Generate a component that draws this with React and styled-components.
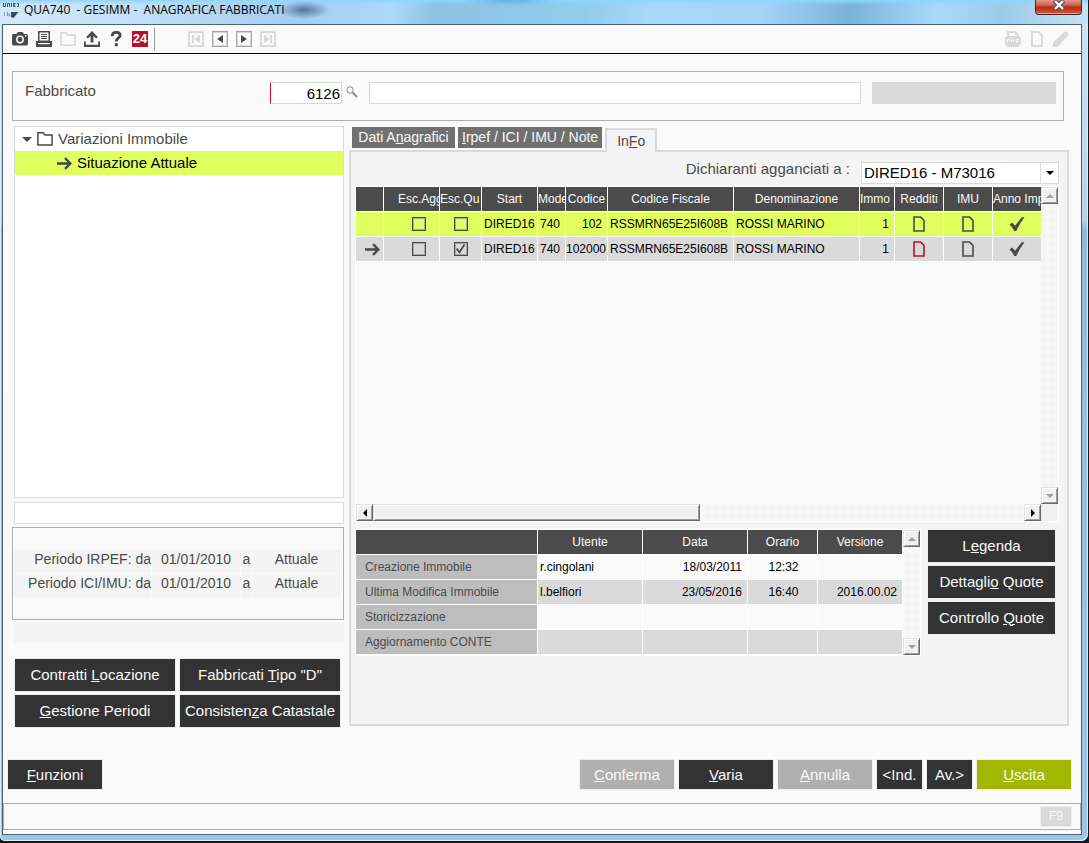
import styled, { createGlobalStyle, css } from 'styled-components';

const GlobalStyle = createGlobalStyle`
  * {
    box-sizing: border-box;
  }

  body {
    margin: 0;
    background: #16191c;
    color: #4a4a4a;
    font-family: 'Liberation Sans', Arial, sans-serif;
    font-size: 15px;
  }

  button,
  input,
  select {
    font: inherit;
    margin: 0;
    border-radius: 0;
  }
`;

const Desktop = styled.div`
  display: flex;
  min-height: 100vh;
  padding: 0 1px 2px 0;
  background: #16191c;
`;

const WindowFrame = styled.div`
  flex: 1;
  min-width: 0;
  display: flex;
  flex-direction: column;
  padding: 0 6px 6px 2px;
  border-radius: 0 0 7px 5px;
  background: linear-gradient(
    180deg,
    #cfe4f5 0,
    #b4d4ee 220px,
    #8fbadb 230px,
    #9cc6e6 100%
  );
  box-shadow: inset -1px -1px 0 #d8ecfa, inset 1px 0 0 #d8ecfa;
`;

const TitleBar = styled.header`
  display: flex;
  align-items: flex-start;
  justify-content: space-between;
  height: 24px;
  margin: 0 -6px 0 -2px;
  padding: 0 6px 0 3px;
  background: radial-gradient(
      ellipse 26px 9px at 304px 10px,
      rgba(50, 84, 122, 0.7),
      transparent
    ),
    radial-gradient(
      ellipse 50px 6px at 510px 0,
      rgba(90, 165, 225, 0.8),
      transparent
    ),
    linear-gradient(
      #8fd6fb 0,
      rgba(143, 214, 251, 0) 5px
    ),
    linear-gradient(
      100deg,
      #d3e9fa 0,
      #c3e1f8 12%,
      #a5cdf0 28%,
      #aed9fb 36%,
      #8cc3e2 40%,
      #90cdec 54%,
      #aad8fc 60%,
      #a5d4f8 70%,
      #78b4d8 78%,
      #a8dafb 86%,
      #9ccbea 92%,
      #c5e2f6 100%
    );
`;

const Caption = styled.div`
  display: flex;
  align-items: flex-start;
  gap: 5px;
`;

const WindowTitle = styled.h1`
  margin: 0;
  color: #000;
  font-family: 'Open Sans', 'Noto Sans', sans-serif;
  font-size: 12px;
  font-weight: 400;
  line-height: 20px;
  white-space: pre;
`;

const CloseButton = styled.button`
  display: flex;
  align-items: center;
  justify-content: center;
  width: 47px;
  height: 15px;
  padding: 0 0 4px;
  border: 1px solid #43222a;
  border-top: 0;
  border-radius: 0 0 4px 4px;
  background: linear-gradient(#e09a8c, #cf5a45 40%, #b92b16 50%, #d4553a);
  box-shadow: inset 0 -1px 0 #e8a598;
`;

const Client = styled.div`
  flex: 1;
  display: flex;
  flex-direction: column;
  padding-bottom: 4px;
  border: 1px solid #4f6272;
  background: #fafafa;
`;

const Toolbar = styled.div`
  display: flex;
  align-items: center;
  justify-content: space-between;
  height: 29px;
  padding: 0 11px 0 8px;
  border-bottom: 1px solid #000;
`;

const ToolGroup = styled.div`
  display: flex;
  align-items: center;
  gap: 6px;
`;

const ToolButton = styled.button`
  display: flex;
  width: 18px;
  height: 18px;
  padding: 1px;
  border: 0;
  background: none;
  color: ${({ disabled }) => (disabled ? '#dadada' : '#4a4a4a')};
`;

const NavButton = styled(ToolButton)`
  align-items: center;
  justify-content: center;
  width: 16px;
  height: 16px;
  margin: 0 1px;
  padding: 0;
  border: 1px solid ${({ disabled }) => (disabled ? '#dadada' : '#a4a4a4')};
  box-shadow: inset 0 0 0 1px #dadada;
`;

const Divider = styled.div`
  width: 1px;
  height: 23px;
  margin: 0 26px 0 -1px;
  background: #9a9a9a;
`;

const SearchBox = styled.section`
  display: flex;
  align-items: flex-start;
  height: 50px;
  margin: 17px 17px 5px 9px;
  padding: 10px 7px 0 12px;
  border: 1px solid #aeaeae;
`;

const SearchLabel = styled.label`
  width: 245px;
  line-height: 18px;
`;

const TextField = styled.input`
  flex: ${({ $grow }) => ($grow ? 1 : 'none')};
  min-width: 0;
  width: ${({ $width }) => $width || 'auto'};
  height: 22px;
  padding: 0 1px;
  border: 1px solid #dadada;
  border-left-color: ${({ $required }) => ($required ? '#c8102e' : '#dadada')};
  background: #fff;
  color: #000;
  text-align: ${({ $align }) => $align || 'left'};

  &:read-only {
    background: #dadada;
  }
`;

const LookupButton = styled(ToolButton)`
  width: 14px;
  height: 14px;
  margin: 3px 10px 0 3px;
  color: #8c8c8c;
`;

const Gap = styled.div`
  width: 11px;
`;

const Columns = styled.main`
  flex: 1;
  display: flex;
  gap: 5px;
  padding: 0 12px 0 9px;
`;

const Sidebar = styled.aside`
  flex: none;
  display: flex;
  flex-direction: column;
  width: 332px;
`;

const Tree = styled.ul`
  flex: 1;
  margin: 0 0 4px 2px;
  padding: 0;
  border: 1px solid #dadada;
  background: #fff;
  list-style: none;
`;

const TreeItem = styled.li`
  display: flex;
  align-items: center;
  gap: 5px;
  height: 24px;
  padding-left: ${({ $level }) => ($level ? 42 : 7)}px;
  background: ${({ $selected }) => ($selected ? '#e0ff5f' : 'none')};
  color: ${({ $selected }) => ($selected ? '#000' : '#4a4a4a')};

  span {
    padding-bottom: 2px;
  }
`;

const TreeNote = styled(TextField)`
  margin: 0 0 3px 2px;
`;

const PeriodBox = styled.section`
  display: flex;
  flex-direction: column;
  gap: 1px;
  height: 93px;
  padding: 22px 3px 0 1px;
  border: 1px solid #aeaeae;
`;

const PeriodRow = styled.div`
  display: grid;
  grid-template-columns: 137px 88px 11px 1fr;
  column-gap: 1px;
  height: 23px;
  font-size: 14px;
  line-height: 18px;
  text-align: center;
  white-space: nowrap;

  span {
    background: #f4f4f4;
  }

  span:first-child {
    text-align: right;
  }
`;

const Message = styled.div`
  height: 21px;
  margin: 2px 0 16px 2px;
  background: #f4f4f4;
`;

const ButtonGrid = styled.div`
  display: grid;
  grid-template-columns: 1fr 1fr;
  gap: 4px 5px;
  margin: 0 4px 0 3px;
`;

const tones = {
  dark: '#333333',
  accent: '#a2b800',
};

const Button = styled.button`
  width: ${({ $width }) => $width || 'auto'};
  height: ${({ $low }) => ($low ? 29 : 32)}px;
  padding: 0 0 ${({ $low }) => ($low ? 0 : 2)}px;
  border: 0;
  background: ${({ $tone, disabled }) =>
    disabled ? '#b0b0b0' : tones[$tone || 'dark']};
  box-shadow: 0 0 0 1px #eeeeee;
  color: #fafafa;
  white-space: nowrap;
`;

const Content = styled.section`
  flex: 1;
  min-width: 0;
  display: flex;
  flex-direction: column;
  padding-bottom: 1px;
`;

const Tabs = styled.div`
  display: flex;
  align-items: flex-start;
  gap: 3px;
  height: 24px;
  padding: 1px 3px 0;
`;

const Tab = styled.button`
  min-width: 103px;
  height: 21px;
  padding: 0 4px;
  border: 0;
  background: #707070;
  color: #fafafa;
  font-size: 14px;
  line-height: 21px;
  white-space: nowrap;

  ${({ $active }) =>
    $active &&
    css`
      align-self: flex-end;
      min-width: 52px;
      height: 24px;
      margin-bottom: -2px;
      border: 2px solid #dadada;
      border-bottom: 0;
      background: #f4f4f4;
      color: #4a4a4a;
      z-index: 1;
    `}
`;

const Panel = styled.div`
  flex: 1;
  display: flex;
  flex-direction: column;
  padding: 10px 8px 68px 4px;
  border: 2px solid #dadada;
  background: #f4f4f4;
`;

const FilterRow = styled.div`
  display: flex;
  justify-content: flex-end;
  gap: 11px;
  margin-bottom: 2px;
  line-height: 14px;
`;

const Combo = styled.div`
  display: grid;
  width: 198px;
  height: 22px;
  border: 1px solid #dadada;
  background: #fff;

  select,
  span {
    grid-area: 1 / 1;
  }

  select {
    appearance: none;
    padding: 0 20px 0 2px;
    border: 0;
    background: none;
    color: #000;
  }

  span {
    display: flex;
    align-items: center;
    justify-content: center;
    justify-self: end;
    width: 18px;
    border-left: 1px solid #dadada;
    color: #000;
    pointer-events: none;
  }
`;

const GridFrame = styled.div`
  flex: ${({ $grow }) => ($grow ? 1 : 'none')};
  display: grid;
  grid-template-columns: minmax(0, 1fr) 17px;
  grid-template-rows: 1fr ${({ $grow }) => ($grow ? '17px' : '')};
  border: 1px solid #fff;
  background: #fafafa;
`;

const GridView = styled.div`
  overflow: hidden;
`;

const Table = styled.table`
  width: ${({ $width }) => $width};
  table-layout: fixed;
  border-spacing: 0;
  color: #000;
  font-size: 12px;
`;

const cell = css`
  height: 25px;
  padding: 0 2px;
  border-right: 1px solid #fff;
  border-bottom: 1px solid #fff;
  overflow: hidden;
  white-space: nowrap;
`;

const HeadCell = styled.th`
  ${cell}
  padding: 0 0 0 ${({ $indent }) => $indent || 0}px;
  background: #4b4b4b;
  color: #fafafa;
  font-weight: 400;
  text-align: ${({ $align }) => $align || 'center'};
`;

const RowHead = styled.th`
  ${cell}
  padding-left: 9px;
  background: #bdbdbd;
  color: #4a4a4a;
  font-weight: 400;
  text-align: left;
`;

const Cell = styled.td`
  ${cell}
  padding-right: ${({ $align }) => ($align === 'right' ? 5 : 0)}px;
  text-align: ${({ $align }) => $align || 'left'};
`;

const IconCell = styled.td`
  ${cell}
  padding: 0 0 0 ${({ $indent }) => $indent || 0}px;

  svg,
  input {
    display: block;
    margin: 0 auto;
  }
`;

const Row = styled.tr`
  background: ${({ $tone }) => $tone || 'none'};
`;

const CheckBox = styled.input`
  appearance: none;
  width: 14px;
  height: 14px;
  border: 1px solid #4a4a4a;
  box-shadow: inset 0 0 0 1px #a8a8a8;

  &:checked::before {
    content: '';
    display: block;
    width: 12px;
    height: 12px;
    background: #4a4a4a;
    clip-path: polygon(12% 52%, 26% 42%, 40% 64%, 78% 8%, 90% 14%, 42% 92%);
  }
`;

const ScrollTrack = styled.div`
  display: flex;
  flex-direction: ${({ $vertical }) => ($vertical ? 'column' : 'row')};
  background: repeating-conic-gradient(#fff 0 25%, #f0f0f0 0 50%) 0 0 / 2px 2px;
`;

const bevel = css`
  border: 1px solid;
  border-color: #e3e3e3 #696969 #696969 #e3e3e3;
  background: #f0f0f0;
  box-shadow: inset 1px 1px 0 #fff, inset -1px -1px 0 #a0a0a0;
`;

const ScrollButton = styled.button`
  ${bevel}
  display: flex;
  align-items: center;
  justify-content: center;
  width: 17px;
  height: 17px;
  padding: 0;
  color: ${({ disabled }) => (disabled ? '#a0a0a0' : '#000')};
`;

const ScrollThumb = styled.div`
  ${bevel}
  flex: 1;
`;

const Spacer = styled.div`
  flex: 1;
`;

const Corner = styled.div`
  background: #f0f0f0;
`;

const LogRow = styled.div`
  display: flex;
  gap: 7px;
  margin-top: 7px;
`;

const ButtonStack = styled.div`
  display: flex;
  flex-direction: column;
  gap: 4px;
  padding-top: 1px;
`;

const ActionBar = styled.footer`
  display: flex;
  gap: 5px;
  margin: 33px 10px 14px 5px;
`;

const StatusBar = styled.div`
  display: flex;
  align-items: center;
  justify-content: flex-end;
  height: 27px;
  padding-right: 8px;
  border: 1px solid #aeaeae;
`;

const StatusKey = styled.span`
  width: 32px;
  height: 21px;
  border: 1px solid #eeeeee;
  background: #dadada;
  color: #fafafa;
  font-size: 12px;
  line-height: 19px;
  text-align: center;
`;

const ARROWS = {
  up: '0,4 8,4 4,0',
  down: '0,0 8,0 4,4',
  left: '4,0 4,8 0,4',
  right: '0,0 4,4 0,8',
};

const Arrow = ({ dir, width, height }) => {
  const tall = dir === 'left' || dir === 'right';
  const w = tall ? 4 : 8;
  const h = tall ? 8 : 4;
  return (
    <svg
      width={width || w}
      height={height || h}
      viewBox={`0 0 ${w} ${h}`}
      preserveAspectRatio="none"
    >
      <polygon points={ARROWS[dir]} fill="currentColor" />
    </svg>
  );
};

const Icon = ({ size = 16, children }) => (
  <svg width={size} height={size} viewBox="0 0 16 16" fill="currentColor">
    {children}
  </svg>
);

const CameraIcon = () => (
  <Icon>
    <path d="M1 3h3.500L6 1h4.500L12 3h3l1 1v9.500l-1 1H1l-1-1V4z" />
    <circle cx="8" cy="8.500" r="3.200" fill="none" stroke="#fafafa" strokeWidth="1.500" />
    <rect x="13" y="4" width="1.500" height="1.500" fill="#fafafa" />
  </Icon>
);

const PrinterIcon = () => (
  <Icon>
    <path fillRule="evenodd" d="M2 0h12v10H2zM3.500 1.500v8h9v-8z" />
    <path d="M5 3h6v1H5zM5 5h6v1H5zM5 7h6v1H5zM0 10h16v6H0z" />
    <path d="M2 12h12v1.200H2z" fill="#fafafa" />
  </Icon>
);

const FolderIcon = ({ weight = 1.5 }) => (
  <Icon>
    <path
      d="M.9 1.800h5.300L8 4h7.100v10.100H.9z"
      fill="none"
      stroke="currentColor"
      strokeWidth={weight}
    />
  </Icon>
);

const UploadIcon = () => (
  <Icon>
    <path d="M8 0l5.800 6-1.700 1.500-2.700-2.400v6.400H6.600V5.100L3.900 7.500 2.200 6z" />
    <path d="M0 10.500h1.800v3.300h12.400v-3.300H16V16H0z" />
  </Icon>
);

const HelpIcon = () => (
  <Icon>
    <path
      d="M4.200 5.200c0-5.200 8-4.800 8-1 0 2.900-3.900 2.600-3.900 6.200"
      fill="none"
      stroke="currentColor"
      strokeWidth="2.800"
    />
    <rect x="6.800" y="12.200" width="3" height="3" />
  </Icon>
);

const Badge24 = styled.button`
  width: 16px;
  height: 16px;
  margin: 0 1px;
  padding: 0;
  border: 0;
  background: #b8102c;
  color: #fff;
  font-size: 13px;
  font-weight: 700;
  line-height: 16px;
`;

const SkipIcon = ({ flip }) => (
  <svg width="10" height="10" viewBox="0 0 10 10" fill="currentColor">
    <g transform={flip ? 'matrix(-1 0 0 1 10 0)' : undefined}>
      <path d="M1 1h2v8H1zM9 .5v9L3.500 5z" />
    </g>
  </svg>
);

const PdfIcon = () => (
  <Icon>
    <path
      fillRule="evenodd"
      d="M2 6V0h8.500L14 3.500V6h2v8h-2v2H2v-2H0V6zM4 2v3h8V4h-2V2z"
    />
    <path
      d="M2.500 11V8.500h2V10M6.500 8v3M8.500 8.500v2M11.500 12V8.500H14M11.500 10.500H13"
      fill="none"
      stroke="#fafafa"
    />
  </Icon>
);

const PageIcon = ({ color = 'currentColor', weight = 1.6 }) => (
  <Icon>
    <path
      d="M3 1h6.500L13 4.500V15H3z"
      fill="none"
      stroke={color}
      strokeWidth={weight}
    />
    <path d="M9 1l4 4V3.500L10.500 1z" fill={color} />
  </Icon>
);

const PencilIcon = () => (
  <Icon>
    <path d="M0 16v-4.500L11.500.8c1.600-1.600 5.300 1.800 3.700 3.700L4.500 16z" />
  </Icon>
);

const LensIcon = () => (
  <svg width="12" height="12" viewBox="0 0 12 12" fill="none" stroke="currentColor">
    <circle cx="4" cy="4" r="3.200" />
    <path d="M6.500 6.500l4.500 4.500" strokeWidth="2" />
  </svg>
);

const RowArrowIcon = () => (
  <svg width="15" height="13" viewBox="0 0 15 13" fill="none" stroke="#4a4a4a">
    <path d="M0 6.500h13M8 1.200l5.300 5.300L8 11.800" strokeWidth="2.400" />
  </svg>
);

const TickIcon = () => (
  <svg width="16" height="16" viewBox="0 0 16 16" fill="#4a4a4a">
    <path d="M.5 8.500L3.200 6.400 6 9.800 12.800 1.200h2.700C12 6 9.500 10 7.300 15H5.200C4 12.500 2.500 10.500.5 8.500z" />
  </svg>
);

const AppIcon = () => (
  <svg width="16" height="18" viewBox="0 0 16 18">
    <g fill="none" stroke="#35566f">
      <path d="M.5 3v3.500h2V3M4.500 7V3.500h2V7M8.500 3v4M12.500 3.500h-2v3h2M10.500 5h2M14 3.500h1.500v3H14" />
      <path d="M1.500 12v4M4.500 12v4h2v-2h-2" opacity=".5" />
    </g>
    <path d="M8 12h7.500l-5 6-2.500-1z" fill="#2f4d66" />
  </svg>
);

const CloseIcon = () => (
  <svg width="12" height="10" viewBox="0 0 12 10">
    <path d="M1.500.5l9 9M10.500.5l-9 9" stroke="#4a4a5a" strokeWidth="4.500" />
    <path d="M2 1l8 8M10 1L2 9" stroke="#fff" strokeWidth="2.400" />
  </svg>
);

const COLUMNS = [
  { label: '', width: 28 },
  { label: 'Esc.Agg', width: 56, align: 'left', indent: 14 },
  { label: 'Esc.Qu', width: 42, align: 'left' },
  { label: 'Start', width: 56 },
  { label: 'Mode', width: 28, align: 'left' },
  { label: 'Codice', width: 42 },
  { label: 'Codice Fiscale', width: 126 },
  { label: 'Denominazione', width: 126 },
  { label: 'Immo', width: 35, align: 'left' },
  { label: 'Redditi', width: 49 },
  { label: 'IMU', width: 49 },
  { label: 'Anno Imp', width: 49, align: 'left' },
];

const DECLARANTS = [
  {
    start: 'DIRED16',
    model: '740',
    code: '102',
    taxCode: 'RSSMRN65E25I608B',
    name: 'ROSSI MARINO',
    building: 1,
    tone: '#e0ff5f',
  },
  {
    current: true,
    skipShare: true,
    start: 'DIRED16',
    model: '740',
    code: '102000',
    taxCode: 'RSSMRN65E25I608B',
    name: 'ROSSI MARINO',
    building: 1,
    incomeColor: '#b8102c',
    tone: '#dadada',
  },
];

const LOG = [
  ['Creazione Immobile', 'r.cingolani', '18/03/2011', '12:32', ''],
  ['Ultima Modifica Immobile', 'l.belfiori', '23/05/2016', '16:40', '2016.00.02'],
  ['Storicizzazione', '', '', '', ''],
  ['Aggiornamento CONTE', '', '', '', ''],
];

const VerticalScroll = () => (
  <ScrollTrack $vertical>
    <ScrollButton aria-label="Su" disabled>
      <Arrow dir="up" />
    </ScrollButton>
    <Spacer />
    <ScrollButton aria-label="Giù" disabled>
      <Arrow dir="down" />
    </ScrollButton>
  </ScrollTrack>
);

const DeclarantGrid = () => (
  <GridFrame $grow>
    <GridView>
      <Table $width="686px">
        <colgroup>
          {COLUMNS.map(({ width }, i) => (
            <col key={i} width={width} />
          ))}
        </colgroup>
        <thead>
          <tr>
            {COLUMNS.map(({ label, align, indent }, i) => (
              <HeadCell key={i} $align={align} $indent={indent}>
                {label}
              </HeadCell>
            ))}
          </tr>
        </thead>
        <tbody>
          {DECLARANTS.map((item) => (
            <Row key={item.code} $tone={item.tone}>
              <IconCell $indent={6}>{item.current && <RowArrowIcon />}</IconCell>
              <IconCell $indent={14}>
                <CheckBox type="checkbox" aria-label="Esc.Agg" />
              </IconCell>
              <IconCell>
                <CheckBox
                  type="checkbox"
                  aria-label="Esc.Qu"
                  defaultChecked={item.skipShare}
                />
              </IconCell>
              <Cell>{item.start}</Cell>
              <Cell>{item.model}</Cell>
              {item.code.length > 5 ? (
                <IconCell>{item.code}</IconCell>
              ) : (
                <Cell $align="right">{item.code}</Cell>
              )}
              <Cell>{item.taxCode}</Cell>
              <Cell>{item.name}</Cell>
              <Cell $align="right">{item.building}</Cell>
              <IconCell>
                <PageIcon color={item.incomeColor || '#4a4a4a'} />
              </IconCell>
              <IconCell>
                <PageIcon color="#4a4a4a" />
              </IconCell>
              <IconCell>
                <TickIcon />
              </IconCell>
            </Row>
          ))}
        </tbody>
      </Table>
    </GridView>
    <VerticalScroll />
    <ScrollTrack>
      <ScrollButton aria-label="Sinistra">
        <Arrow dir="left" />
      </ScrollButton>
      <ScrollThumb />
      <Spacer />
      <ScrollButton aria-label="Destra">
        <Arrow dir="right" />
      </ScrollButton>
    </ScrollTrack>
    <Corner />
  </GridFrame>
);

const LogGrid = () => (
  <GridFrame>
    <GridView>
      <Table $width="547px">
        <colgroup>
          <col width="182" />
          <col width="105" />
          <col width="105" />
          <col width="70" />
          <col width="85" />
        </colgroup>
        <thead>
          <tr>
            {['', 'Utente', 'Data', 'Orario', 'Versione'].map((label) => (
              <HeadCell key={label}>{label}</HeadCell>
            ))}
          </tr>
        </thead>
        <tbody>
          {LOG.map(([label, user, date, time, version], i) => (
            <Row key={label} $tone={i % 2 ? '#dadada' : '#fafafa'}>
              <RowHead>{label}</RowHead>
              <Cell>{user}</Cell>
              <Cell $align="right">{date}</Cell>
              <Cell $align="center">{time}</Cell>
              <Cell $align="right">{version}</Cell>
            </Row>
          ))}
        </tbody>
      </Table>
    </GridView>
    <VerticalScroll />
  </GridFrame>
);

const App = () => {
  return (
    <Desktop>
      <GlobalStyle />
      <WindowFrame>
        <TitleBar>
          <Caption>
            <AppIcon />
            <WindowTitle>{'QUA740  - GESIMM -  ANAGRAFICA FABBRICATI'}</WindowTitle>
          </Caption>
          <CloseButton aria-label="Chiudi">
            <CloseIcon />
          </CloseButton>
        </TitleBar>
        <Client>
          <Toolbar>
            <ToolGroup>
              <ToolButton aria-label="Cattura">
                <CameraIcon />
              </ToolButton>
              <ToolButton aria-label="Stampa">
                <PrinterIcon />
              </ToolButton>
              <ToolButton aria-label="Apri" disabled>
                <FolderIcon weight={1.8} />
              </ToolButton>
              <ToolButton aria-label="Esporta">
                <UploadIcon />
              </ToolButton>
              <ToolButton aria-label="Guida">
                <HelpIcon />
              </ToolButton>
              <Badge24>24</Badge24>
              <Divider />
              <NavButton aria-label="Primo" disabled>
                <SkipIcon />
              </NavButton>
              <NavButton aria-label="Precedente">
                <Arrow dir="left" width={6} height={8} />
              </NavButton>
              <NavButton aria-label="Successivo">
                <Arrow dir="right" width={6} height={8} />
              </NavButton>
              <NavButton aria-label="Ultimo" disabled>
                <SkipIcon flip />
              </NavButton>
            </ToolGroup>
            <ToolGroup>
              <ToolButton aria-label="PDF" disabled>
                <PdfIcon />
              </ToolButton>
              <ToolButton aria-label="Nuovo" disabled>
                <PageIcon weight={2} />
              </ToolButton>
              <ToolButton aria-label="Modifica" disabled>
                <PencilIcon />
              </ToolButton>
            </ToolGroup>
          </Toolbar>

          <SearchBox>
            <SearchLabel htmlFor="fabbricato">Fabbricato</SearchLabel>
            <TextField
              id="fabbricato"
              defaultValue="6126"
              $width="72px"
              $align="right"
              $required
            />
            <LookupButton aria-label="Cerca">
              <LensIcon />
            </LookupButton>
            <TextField aria-label="Descrizione" $grow />
            <Gap />
            <TextField aria-label="Stato" $width="184px" readOnly />
          </SearchBox>

          <Columns>
            <Sidebar>
              <Tree>
                <TreeItem>
                  <Arrow dir="down" width={10} height={5} />
                  <FolderIcon />
                  <span>Variazioni Immobile</span>
                </TreeItem>
                <TreeItem $level={1} $selected>
                  <RowArrowIcon />
                  <span>Situazione Attuale</span>
                </TreeItem>
              </Tree>
              <TreeNote aria-label="Note" />
              <PeriodBox>
                <PeriodRow>
                  <span>Periodo IRPEF: da</span>
                  <span>01/01/2010</span>
                  <span>a</span>
                  <span>Attuale</span>
                </PeriodRow>
                <PeriodRow>
                  <span>Periodo ICI/IMU: da</span>
                  <span>01/01/2010</span>
                  <span>a</span>
                  <span>Attuale</span>
                </PeriodRow>
              </PeriodBox>
              <Message />
              <ButtonGrid>
                <Button>
                  Contratti <u>L</u>ocazione
                </Button>
                <Button>
                  Fabbricati <u>T</u>ipo "D"
                </Button>
                <Button>
                  <u>G</u>estione Periodi
                </Button>
                <Button>
                  Consisten<u>z</u>a Catastale
                </Button>
              </ButtonGrid>
            </Sidebar>

            <Content>
              <Tabs>
                <Tab>
                  Dati A<u>n</u>agrafici
                </Tab>
                <Tab>
                  <u>I</u>rpef / ICI / IMU / Note
                </Tab>
                <Tab $active>
                  In<u>F</u>o
                </Tab>
              </Tabs>
              <Panel>
                <FilterRow>
                  <label htmlFor="dichiaranti">Dichiaranti agganciati a :</label>
                  <Combo>
                    <select id="dichiaranti">
                      <option>DIRED16 - M73016</option>
                    </select>
                    <span>
                      <Arrow dir="down" />
                    </span>
                  </Combo>
                </FilterRow>
                <DeclarantGrid />
                <LogRow>
                  <LogGrid />
                  <ButtonStack>
                    <Button $width="127px">
                      L<u>e</u>genda
                    </Button>
                    <Button $width="127px">
                      Dettagli<u>o</u> Quote
                    </Button>
                    <Button $width="127px">
                      Controllo <u>Q</u>uote
                    </Button>
                  </ButtonStack>
                </LogRow>
              </Panel>
            </Content>
          </Columns>

          <ActionBar>
            <Button $low $width="94px">
              <u>F</u>unzioni
            </Button>
            <Spacer />
            <Button $low $width="94px" disabled>
              <u>C</u>onferma
            </Button>
            <Button $low $width="94px">
              <u>V</u>aria
            </Button>
            <Button $low $width="94px" disabled>
              <u>A</u>nnulla
            </Button>
            <Button $low $width="45px">
              &lt;Ind.
            </Button>
            <Button $low $width="45px">
              Av.&gt;
            </Button>
            <Button $low $width="94px" $tone="accent">
              <u>U</u>scita
            </Button>
          </ActionBar>
          <StatusBar>
            <StatusKey>F9</StatusKey>
          </StatusBar>
        </Client>
      </WindowFrame>
    </Desktop>
  );
};

export default App;
